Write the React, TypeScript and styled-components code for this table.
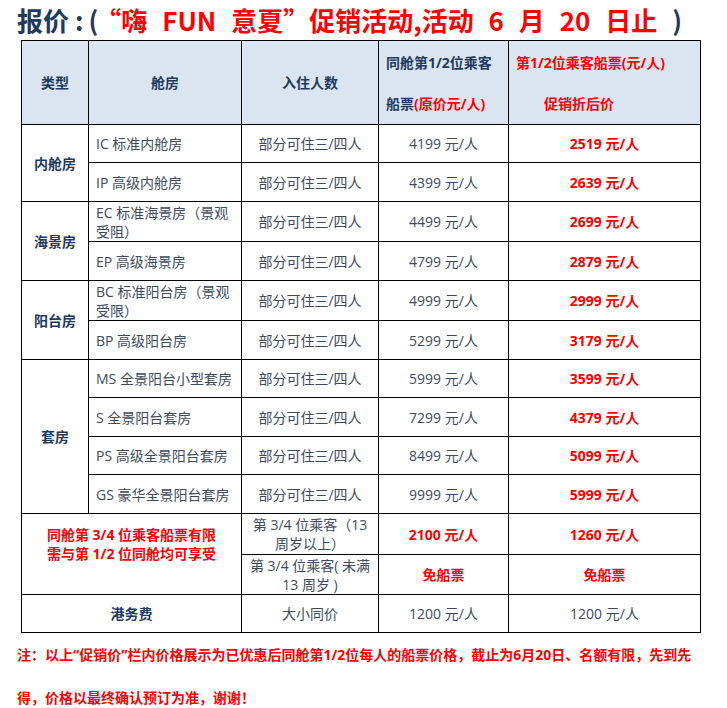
import React from "react";
import styled, { createGlobalStyle } from "styled-components";

const NAVY = "#1f3a5f";
const INK = "#3e4b5c";
const RED = "#ff0000";
const HEAD_BG = "#dbe5f1";

const GlobalStyle = createGlobalStyle`
  body {
    margin: 0;
    background: #fff;
    font-family: "Open Sans", "Noto Sans CJK SC", sans-serif;
  }
`;

const Page = styled.div`
  width: 727px;
  padding-left: 17px;
  box-sizing: border-box;
`;

const Title = styled.h1`
  margin: 0;
  height: 40px;
  line-height: 40px;
  font-family: "Noto Sans CJK SC", sans-serif;
  font-size: 26px;
  font-weight: 700;
  word-spacing: 9px;
  color: ${NAVY};
  white-space: nowrap;
`;

const Colon = styled.span`
  margin: 0 5px 0 6px;
`;

const Red = styled.span<{ $gap?: number }>`
  color: ${RED};
  margin-left: ${(p) => p.$gap ?? 0}px;
`;

const Table = styled.table`
  margin-left: 4px;
  width: 679px;
  border-collapse: collapse;
  table-layout: fixed;
  font-size: 14px;
  color: ${INK};
`;

const HeadCell = styled.th<{ $left?: boolean; $red?: boolean }>`
  height: 83px;
  padding: 0 7px;
  border: 1px solid #000;
  background: ${HEAD_BG};
  color: ${(p) => (p.$red ? RED : NAVY)};
  font-weight: 700;
  line-height: 41px;
  text-align: ${(p) => (p.$left ? "left" : "center")};
  vertical-align: middle;
  white-space: nowrap;
`;

const Indent = styled.span`
  display: inline-block;
  padding-left: 28px;
`;

const Row = styled.tr<{ $h: number }>`
  height: ${(p) => p.$h}px;
`;

const Cell = styled.td<{ $left?: boolean; $red?: boolean; $bold?: boolean; $lift?: number }>`
  padding: 0 7px ${(p) => p.$lift ?? 0}px;
  border: 1px solid #000;
  line-height: 19px;
  text-align: ${(p) => (p.$left ? "left" : "center")};
  vertical-align: middle;
  color: ${(p) => (p.$red ? RED : p.$bold ? NAVY : INK)};
  font-weight: ${(p) => (p.$bold || p.$red ? 700 : 400)};
`;

const Note = styled.p`
  margin: 0;
  font-size: 14px;
  font-weight: 700;
  line-height: 43px;
  color: ${RED};
  white-space: nowrap;
`;

type Cabin = { name: string; from: number; to: number; h: number };

const groups: { type: string; cabins: Cabin[] }[] = [
  {
    type: "内舱房",
    cabins: [
      { name: "IC 标准内舱房", from: 4199, to: 2519, h: 38 },
      { name: "IP 高级内舱房", from: 4399, to: 2639, h: 39 },
    ],
  },
  {
    type: "海景房",
    cabins: [
      { name: "EC 标准海景房（景观受阻）", from: 4499, to: 2699, h: 40 },
      { name: "EP 高级海景房", from: 4799, to: 2879, h: 39 },
    ],
  },
  {
    type: "阳台房",
    cabins: [
      { name: "BC 标准阳台房（景观受限）", from: 4999, to: 2999, h: 40 },
      { name: "BP 高级阳台房", from: 5299, to: 3179, h: 39 },
    ],
  },
  {
    type: "套房",
    cabins: [
      { name: "MS 全景阳台小型套房", from: 5999, to: 3599, h: 38 },
      { name: "S 全景阳台套房", from: 7299, to: 4379, h: 39 },
      { name: "PS 高级全景阳台套房", from: 8499, to: 5099, h: 38 },
      { name: "GS 豪华全景阳台套房", from: 9999, to: 5999, h: 39 },
    ],
  },
];

const App = () => {
  return (
    <>
      <GlobalStyle />
      <Page>
        <Title>
          报价<Colon>:</Colon>(<Red $gap={10}>“嗨 FUN 意夏”促销活动,活动 6 月 20 日止</Red> )
        </Title>
        <Table>
          <colgroup>
            <col style={{ width: 67 }} />
            <col style={{ width: 153 }} />
            <col style={{ width: 137 }} />
            <col style={{ width: 130 }} />
            <col style={{ width: 192 }} />
          </colgroup>
          <thead>
            <tr>
              <HeadCell>类型</HeadCell>
              <HeadCell>舱房</HeadCell>
              <HeadCell>入住人数</HeadCell>
              <HeadCell $left>
                同舱第1/2位乘客
                <br />
                船票<Red>(原价元/人)</Red>
              </HeadCell>
              <HeadCell $left $red>
                第1/2位乘客船票(元/人)
                <br />
                <Indent>促销折后价</Indent>
              </HeadCell>
            </tr>
          </thead>
          <tbody>
            {groups.map((g) =>
              g.cabins.map((c, i) => (
                <Row key={c.name} $h={c.h}>
                  {i === 0 && (
                    <Cell rowSpan={g.cabins.length} $bold>
                      {g.type}
                    </Cell>
                  )}
                  <Cell $left>{c.name}</Cell>
                  <Cell>部分可住三/四人</Cell>
                  <Cell>{c.from} 元/人</Cell>
                  <Cell $red>{c.to} 元/人</Cell>
                </Row>
              ))
            )}
            <Row $h={41}>
              <Cell colSpan={2} rowSpan={2} $red $lift={20}>
                同舱第 3/4 位乘客船票有限
                <br />
                需与第 1/2 位同舱均可享受
              </Cell>
              <Cell>
                第 3/4 位乘客（13
                <br />
                周岁以上）
              </Cell>
              <Cell $red>2100 元/人</Cell>
              <Cell $red>1260 元/人</Cell>
            </Row>
            <Row $h={40}>
              <Cell>
                第 3/4 位乘客( 未满
                <br />
                13 周岁 )
              </Cell>
              <Cell $red>免船票</Cell>
              <Cell $red>免船票</Cell>
            </Row>
            <Row $h={38}>
              <Cell colSpan={2} $bold>
                港务费
              </Cell>
              <Cell>大小同价</Cell>
              <Cell>1200 元/人</Cell>
              <Cell>1200 元/人</Cell>
            </Row>
          </tbody>
        </Table>
        <Note>注：以上“促销价”栏内价格展示为已优惠后同舱第1/2位每人的船票价格，截止为6月20日、名额有限，先到先</Note>
        <Note>得，价格以最终确认预订为准，谢谢！</Note>
      </Page>
    </>
  );
};

export default App;
